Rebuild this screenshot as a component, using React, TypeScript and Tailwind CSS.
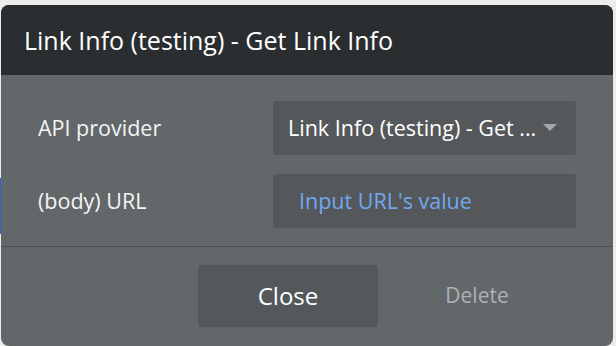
export default function App() {
  return (
    <div className="relative w-[616px] h-[346px] bg-[#ececec] pt-[5px] pl-[1px] pr-[3px] font-['Open_Sans',sans-serif]">
      {/* blue edge from the element behind the dialog */}
      <div className="absolute left-0 top-[178px] h-[56px] w-[1px] bg-[#3d5bd6]" />
      <div className="h-[341px] rounded-lg overflow-hidden bg-[#626769] flex flex-col">
        <div className="h-[70px] bg-[#2a2e31] px-[23px] flex items-center">
          <h1 className="text-[25px] text-white leading-none">Link Info (testing) - Get Link Info</h1>
        </div>

        <div className="pt-[26px] flex flex-col gap-[19px] pr-[37px]">
          <div className="flex items-center">
            <div className="w-[272px] pl-[37px] text-[21.5px] text-[#f4f4f4]">API provider</div>
            <div className="flex-1 h-[54px] bg-[#54585b] rounded-[2px] flex items-center pl-[15px] pr-[19px]">
              <span className="flex-1 text-[21.5px] text-white">Link Info (testing) - Get ...</span>
              <svg width="14" height="8" viewBox="0 0 14 8" className="shrink-0">
                <path d="M0 0h14L7 7z" fill="#a3a7a9" />
              </svg>
            </div>
          </div>
          <div className="flex items-center">
            <div className="w-[272px] pl-[37px] text-[21.5px] text-[#f4f4f4]">(body) URL</div>
            <div className="flex-1 h-[54px] bg-[#54585b] rounded-[2px] flex items-center pl-[26px]">
              <span className="text-[21.5px] text-[#72a8ef]">Input URL's value</span>
            </div>
          </div>
        </div>

        <div className="mt-[18px] border-t-[1px] border-[#4c5052]" />

        <div className="pt-[18px] pl-[197px] flex items-center">
          <button className="w-[180px] h-[62px] bg-[#54585b] rounded-[2px] text-[24px] text-white">Close</button>
          <button className="w-[198px] h-[62px] text-[21px] text-[#aeb2b4]">Delete</button>
        </div>
      </div>
    </div>
  );
}
